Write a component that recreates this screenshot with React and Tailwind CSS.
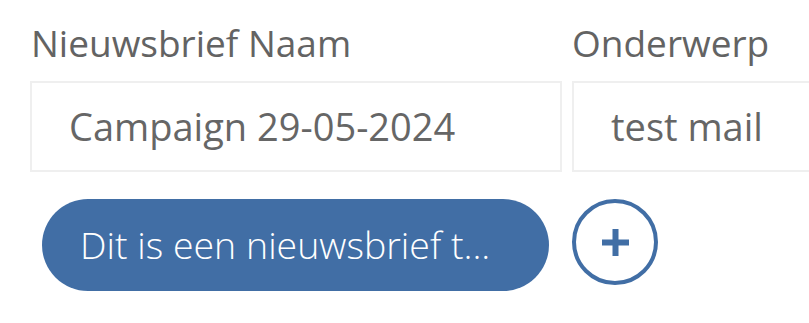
export default function App() {
    return (
        <div className="min-h-screen bg-white font-['Open_Sans',sans-serif] text-[#666666]">
            <div className="pl-[30px] pt-[18px]">
                {/* Fields */}
                <div className="grid grid-cols-[532px_1fr] gap-x-[10px]">
                    <div className="flex flex-col">
                        <label className="pl-[1px] text-[37px] font-medium leading-[50px] text-[#636363] mb-[13px]">
                            Nieuwsbrief Naam
                        </label>
                        <div className="h-[91px] border-2 border-[#efefef] flex items-center pl-[37px] text-[38px]">
                            Campaign 29-05-2024
                        </div>
                    </div>
                    <div className="flex flex-col">
                        <label className="text-[37px] font-medium leading-[50px] text-[#636363] mb-[13px]">
                            Onderwerp
                        </label>
                        <div className="h-[91px] border-2 border-r-0 border-[#efefef] flex items-center pl-[37px] text-[38px]">
                            test mail
                        </div>
                    </div>
                </div>

                {/* Actions */}
                <div className="mt-[27px] flex items-start">
                    <button
                        type="button"
                        className="ml-[12px] w-[507px] h-[92px] rounded-full bg-[#416ea5] text-white text-left pl-[38px] text-[37.5px] font-light"
                    >
                        Dit is een nieuwsbrief t...
                    </button>
                    <button
                        type="button"
                        className="ml-[23px] w-[86px] h-[86px] rounded-full border-[4px] border-[#416ea5] flex items-center justify-center"
                    >
                        <svg width="27" height="27" viewBox="0 0 27 27" fill="#416ea5">
                            <rect x="10.5" y="0" width="6" height="27" />
                            <rect x="0" y="10.5" width="27" height="6" />
                        </svg>
                    </button>
                </div>
            </div>
        </div>
    );
}
